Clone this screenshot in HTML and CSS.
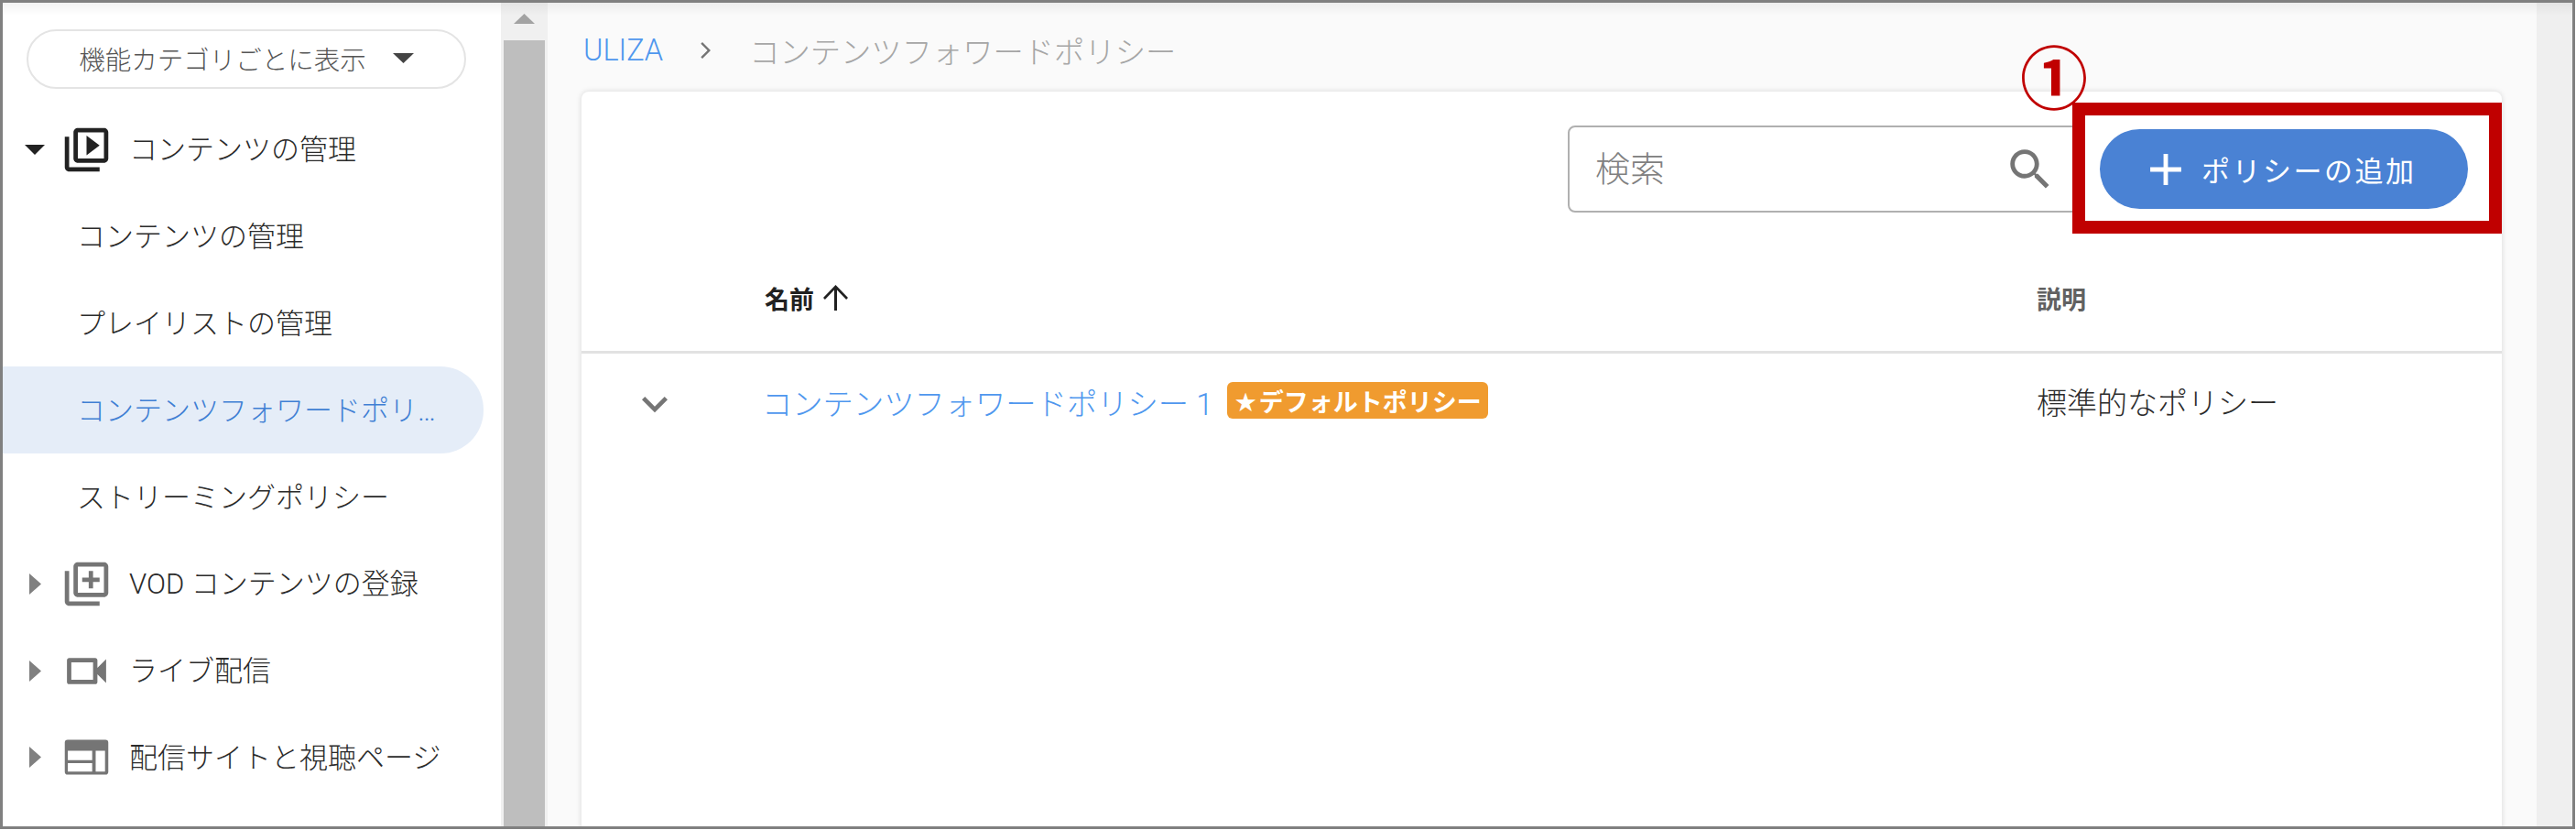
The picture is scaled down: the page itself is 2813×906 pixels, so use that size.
FILE: index.html
```html
<!DOCTYPE html>
<html lang="ja">
<head>
<meta charset="utf-8">
<title>コンテンツフォワードポリシー</title>
<link rel="stylesheet" href="styles.css">
</head>
<body>
<div class="frame">
  <aside class="sidebar">
    <div class="pill"><span>機能カテゴリごとに表示</span><svg class="pill-caret" viewBox="0 0 23 11"><path d="M0 0h23L11.500 11z"/></svg></div>
    <nav class="menu">
      <div class="row parent">
        <span class="caret-slot"><svg class="caret-open" viewBox="0 0 22 11"><path d="M0 0h22L11 11z"/></svg></span>
        <svg class="icon dark" viewBox="0 0 24 24"><path d="M4 6H2v14c0 1.100.9 2 2 2h14v-2H4V6zm16-4H8c-1.100 0-2 .9-2 2v12c0 1.100.9 2 2 2h12c1.100 0 2-.9 2-2V4c0-1.100-.9-2-2-2zm0 14H8V4h12v12zM12 5.500v9l6-4.500z"/></svg>
        <span class="label">コンテンツの管理</span>
      </div>
      <div class="row child"><span class="label">コンテンツの管理</span></div>
      <div class="row child"><span class="label">プレイリストの管理</span></div>
      <div class="row child active"><span class="label">コンテンツフォワードポリ…</span></div>
      <div class="row child"><span class="label">ストリーミングポリシー</span></div>
      <div class="row parent">
        <span class="caret-slot"><svg class="caret-closed" viewBox="0 0 13 23"><path d="M0 0l13 11.500L0 23z"/></svg></span>
        <svg class="icon" viewBox="0 0 24 24"><path d="M4 6H2v14c0 1.100.9 2 2 2h14v-2H4V6zm16-4H8c-1.100 0-2 .9-2 2v12c0 1.100.9 2 2 2h12c1.100 0 2-.9 2-2V4c0-1.100-.9-2-2-2zm0 14H8V4h12v12zm-7-2h2v-3h3V9h-3V6h-2v3h-3v2h3z"/></svg>
        <span class="label">VOD コンテンツの登録</span>
      </div>
      <div class="row parent">
        <span class="caret-slot"><svg class="caret-closed" viewBox="0 0 13 23"><path d="M0 0l13 11.500L0 23z"/></svg></span>
        <svg class="icon" viewBox="0 0 24 24"><path d="M15 8v8H5V8h10m1-2H4c-.55 0-1 .45-1 1v10c0 .55.45 1 1 1h12c.55 0 1-.45 1-1v-3.500l4 4v-11l-4 4V7c0-.55-.45-1-1-1z"/></svg>
        <span class="label">ライブ配信</span>
      </div>
      <div class="row parent">
        <span class="caret-slot"><svg class="caret-closed" viewBox="0 0 13 23"><path d="M0 0l13 11.500L0 23z"/></svg></span>
        <svg class="icon" viewBox="0 0 24 24"><path fill-rule="evenodd" d="M3.300 4h17.400A1.300 1.300 0 0 1 22 5.300v13.400a1.300 1.300 0 0 1-1.300 1.300H3.300A1.300 1.300 0 0 1 2 18.700V5.300A1.300 1.300 0 0 1 3.300 4zM3.400 9v4.400h11.200V9zm0 5.700v3.900h11.200v-3.900zM16.200 9v9.600h4.300V9z"/></svg>
        <span class="label">配信サイトと視聴ページ</span>
      </div>
    </nav>
  </aside>
  <div class="scrollbar left-bar">
    <div class="scroll-btn"><svg class="scroll-arrow" viewBox="0 0 23 11"><path d="M11.500 0L23 11H0z"/></svg></div>
    <div class="scroll-thumb"></div>
  </div>
  <main class="main">
    <div class="crumbs">
      <span class="crumb-link">ULIZA</span>
      <svg class="crumb-sep" viewBox="0 0 14 18"><path d="M2 0l-1.700 1.700L7.600 9 .3 16.300 2 18l9-9z"/></svg>
      <span class="crumb-current">コンテンツフォワードポリシー</span>
    </div>
    <section class="card">
      <div class="toolbar">
        <div class="search">
          <span class="search-text">検索</span>
          <svg class="search-icon" viewBox="0 0 24 24"><path d="M15.500 14h-.79l-.28-.27C15.410 12.590 16 11.110 16 9.500 16 5.910 13.090 3 9.500 3S3 5.910 3 9.500 5.910 16 9.500 16c1.610 0 3.090-.59 4.230-1.570l.27.28v.79l5 4.990L20.490 19l-4.990-5zm-6 0C7.010 14 5 11.990 5 9.500S7.010 5 9.500 5 14 7.010 14 9.500 11.990 14 9.500 14z"/></svg>
        </div>
        <div class="add-btn">
          <svg class="add-icon" viewBox="0 0 24 24"><path d="M19 13h-6v6h-2v-6H5v-2h6V5h2v6h6v2z"/></svg>
          <span>ポリシーの追加</span>
        </div>
      </div>
      <div class="table-head">
        <div></div>
        <div class="th th-name">名前<svg class="sort-icon" viewBox="0 0 27 28"><path d="M13.500 0L27 14l-1.900 1.900L15 5.500V28h-3V5.500L1.900 15.900 0 14z"/></svg></div>
        <div class="th th-desc">説明</div>
      </div>
      <div class="table-row">
        <div class="cell-expand"><svg class="expand-icon" viewBox="0 0 24 24"><path d="M16.590 8.590L12 13.170 7.410 8.590 6 10l6 6 6-6z"/></svg></div>
        <div class="cell-name"><span class="name-link">コンテンツフォワードポリシー 1</span><span class="badge"><span class="star">★</span>デフォルトポリシー</span></div>
        <div class="cell-desc">標準的なポリシー</div>
      </div>
    </section>
  </main>
  <div class="scrollbar right-bar"></div>
  <div class="top-shade"></div>
  <div class="callout-box"></div>
  <div class="callout-num">①</div>
</div>
</body>
</html>
```
FILE: styles.css
```css
* { box-sizing: border-box; }
html, body { margin: 0; padding: 0; background: #fff; }
body {
  width: 2813px;
  height: 906px;
  overflow: hidden;
  font-family: Roboto, "Noto Sans CJK JP", sans-serif;
  font-weight: 300;
}
.frame {
  position: relative;
  display: flex;
  width: 2812px;
  height: 905px;
  border: 3px solid #808080;
  overflow: hidden;
}
.top-shade {
  position: absolute;
  left: 0;
  right: 0;
  top: 0;
  height: 14px;
  background: linear-gradient(rgba(0,0,0,.05), rgba(0,0,0,0));
}

/* sidebar */
.sidebar {
  width: 544px;
  flex: none;
  padding-top: 29px;
  background: #fff;
}
.pill {
  display: flex;
  align-items: center;
  justify-content: center;
  gap: 29px;
  width: 480px;
  height: 65px;
  margin-left: 26px;
  padding-bottom: 2px;
  border: 2px solid #e4e4e4;
  border-radius: 33px;
  font-size: 28.500px;
  color: #555;
}
.pill-caret { width: 23px; height: 11px; fill: #444; }
.menu { margin-top: 19px; }
.row {
  display: flex;
  align-items: center;
  height: 94.8px;
  color: #2b2b2b;
  font-size: 31px;
}
.label { padding-bottom: 5px; }
.child { padding-left: 81px; }
.child .label {
  flex: 1;
  min-width: 0;
  white-space: nowrap;
}
.active {
  width: 525px;
  background: #e5edf8;
  border-radius: 0 47px 47px 0;
  color: #3f7fd4;
}
.caret-slot {
  display: flex;
  justify-content: center;
  align-items: center;
  width: 52px;
  margin-left: 9px;
  margin-right: 2px;
}
.caret-open { width: 22px; height: 11px; fill: #222; }
.caret-closed { width: 13px; height: 23px; fill: #808080; }
.icon { width: 57px; height: 57px; flex: none; margin-right: 18px; fill: #757575; }
.icon.dark { fill: #222; }

/* scrollbars */
.scrollbar { flex: none; }
.left-bar { width: 51px; background: #f0f0f0; display: flex; flex-direction: column; }
.scroll-btn {
  height: 41px;
  display: flex;
  justify-content: center;
  padding-top: 12px;
}
.scroll-arrow { width: 23px; height: 11px; fill: #a3a3a3; }
.scroll-thumb { flex: 1; margin: 0 3px; background: #bebebe; }
.right-bar { width: 39px; background: #efefef; }

/* main */
.main {
  flex: 1;
  min-width: 0;
  padding: 0 38px 0 37px;
  background: #fafafa;
}
.crumbs {
  display: flex;
  align-items: center;
  height: 97px;
  padding-top: 6px;
}
.crumb-link { color: #4f97ee; margin-left: 2px; font-size: 32.500px; }
.crumb-sep { width: 14px; height: 18px; margin-left: 41px; fill: #757575; }
.crumb-current { margin-left: 39px; color: #a6a6a6; font-size: 33.300px; }
.card {
  height: 805px;
  padding-top: 37px;
  background: #fff;
  border-radius: 8px 8px 0 0;
  box-shadow: 0 0 6px rgba(0,0,0,.14);
}
.toolbar {
  display: flex;
  align-items: center;
  justify-content: flex-end;
  gap: 23px;
  height: 95px;
  padding-right: 37px;
}
.search {
  display: flex;
  align-items: center;
  justify-content: space-between;
  width: 558px;
  height: 95px;
  padding: 0 22px 0 28px;
  border: 2px solid #b0b0b0;
  border-radius: 8px;
}
.search-text { font-size: 38px; color: #808080; padding-bottom: 7px; }
.search-icon { width: 58px; height: 58px; fill: #757575; }
.add-btn {
  display: flex;
  align-items: center;
  width: 402px;
  height: 87px;
  padding-left: 43px;
  background: #4a82d4;
  border-radius: 44px;
  color: #fff;
  font-size: 31px;
  font-weight: 400;
  letter-spacing: 2.500px;
}
.add-icon { width: 58px; height: 58px; margin-right: 10px; fill: #fff; }
.table-head, .table-row {
  display: grid;
  grid-template-columns: 200px 1389px 1fr;
  align-items: center;
}
.table-head {
  height: 154px;
  padding-top: 35px;
  border-bottom: 3px solid #e2e2e2;
}
.th { font-size: 27px; font-weight: 700; }
.th-name { display: flex; align-items: center; gap: 10px; color: #212121; }
.sort-icon { width: 27px; height: 28px; fill: #212121; }
.th-desc { color: #616161; }
.table-row { height: 104px; }
.cell-expand { padding: 6px 0 0 52px; display: flex; }
.expand-icon { width: 56px; height: 56px; fill: #757575; }
.cell-name { display: flex; align-items: center; font-size: 33.300px; }
.name-link { color: #4f97ee; margin-left: -3px; }
.badge {
  margin-left: 15px;
  height: 40px;
  width: 285px;
  padding-left: 9px;
  display: flex;
  align-items: center;
  position: relative;
  bottom: 1px;
  background: #f09b2f;
  border-radius: 6px;
  color: #fff;
  font-size: 27px;
  font-weight: 700;
  white-space: nowrap;
}
.star { font-size: 23px; margin-right: 3px; }
.cell-desc { font-size: 33px; color: #2b2b2b; }

/* annotation over the page */
.callout-box {
  position: absolute;
  left: 2260px;
  top: 109px;
  width: 469px;
  height: 143px;
  border: 14px solid #c00000;
}
.callout-num {
  position: absolute;
  left: 2203px;
  top: 36px;
  width: 74px;
  height: 84px;
  line-height: 84px;
  text-align: center;
  font-family: "Noto Sans CJK JP", sans-serif;
  font-size: 74px;
  font-weight: 700;
  color: #c00000;
}
```
